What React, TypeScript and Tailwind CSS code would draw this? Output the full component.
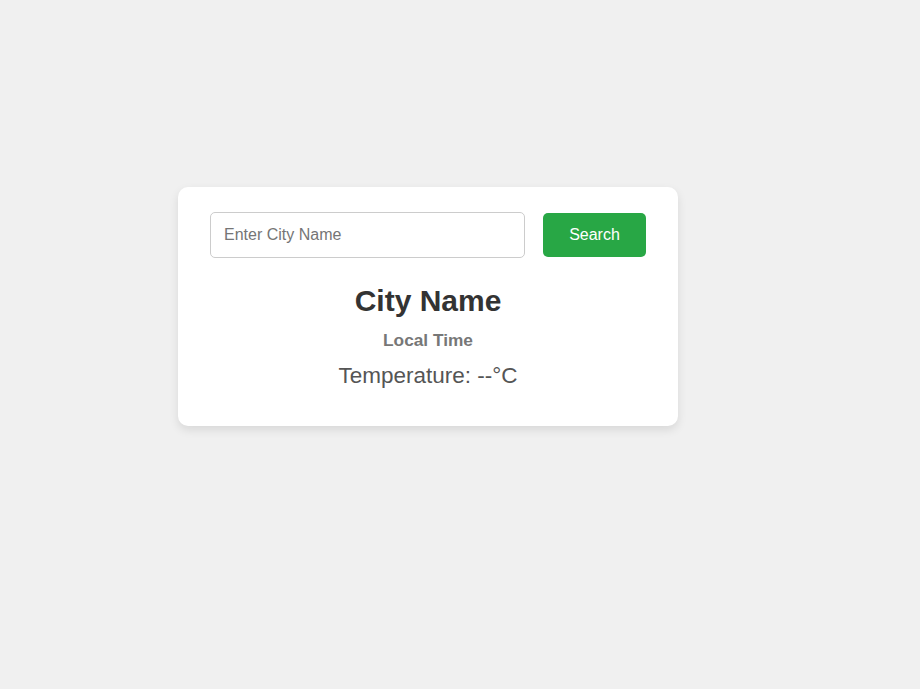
import { useState } from "react";

export default function App() {
  const [city, setCity] = useState("");

  return (
    <div className="min-h-[689px] w-full bg-[#f0f0f0] pt-[187px] pl-[178px] font-['Liberation_Sans',Arial,sans-serif]">
      <div className="w-[500px] rounded-[10px] bg-white px-[32px] pt-[25px] pb-[38px] shadow-[0_4px_10px_rgba(0,0,0,0.1)]">
        <div className="flex items-center gap-[18px]">
          <input
            type="text"
            value={city}
            onChange={(e) => setCity(e.target.value)}
            placeholder="Enter City Name"
            className="h-[46px] w-[315px] rounded-[5px] border border-[#ccc] px-[13px] text-[16px] text-[#333] outline-none placeholder:text-[#757575]"
          />
          <button className="h-[44px] flex-1 rounded-[5px] bg-[#28a745] text-[16px] text-white">
            Search
          </button>
        </div>
        <div className="mt-[26px] flex flex-col items-center text-center">
          <h2 className="text-[30px] leading-[34px] font-bold text-[#333]">City Name</h2>
          <p className="mt-[12px] text-[17.3px] leading-[21px] font-bold text-[#777]">Local Time</p>
          <p className="mt-[12px] text-[22.5px] leading-[25px] text-[#555]">Temperature: --°C</p>
        </div>
      </div>
    </div>
  );
}
